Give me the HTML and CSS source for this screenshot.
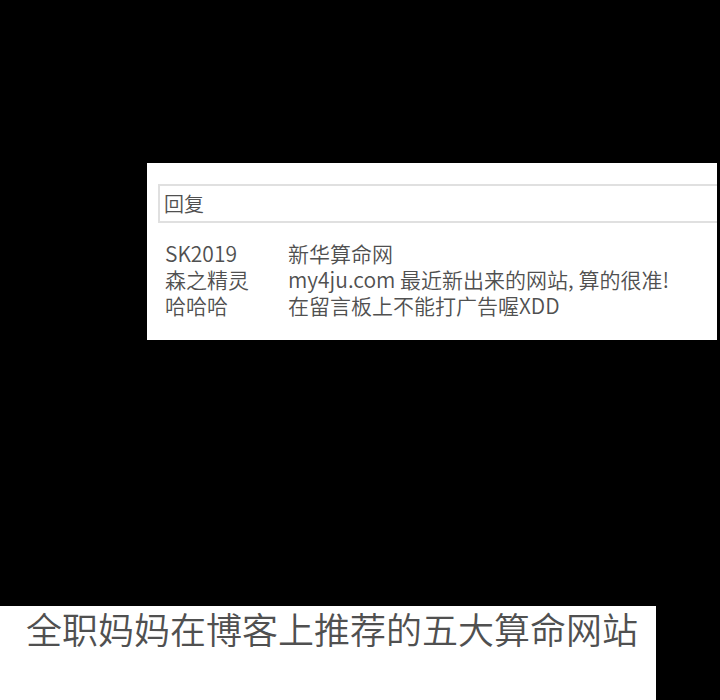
FILE: index.html
```html
<!DOCTYPE html>
<html lang="zh-CN">
<head>
<meta charset="utf-8">
<title>回复</title>
<link rel="stylesheet" href="styles.css">
</head>
<body>
<main class="page">
  <section class="replies">
    <input class="reply-box" type="text" value="回复" aria-label="回复">
    <table class="comments">
      <tr><td class="name">SK2019</td><td>新华算命网</td></tr>
      <tr><td class="name">森之精灵</td><td>my4ju.com 最近新出来的网站, 算的很准!</td></tr>
      <tr><td class="name">哈哈哈</td><td>在留言板上不能打广告喔XDD</td></tr>
    </table>
  </section>
  <header class="headline">
    <h1>全职妈妈在博客上推荐的五大算命网站</h1>
  </header>
</main>
</body>
</html>
```
FILE: styles.css
```css
* { box-sizing: border-box; }
body {
  margin: 0;
  background: #000;
  color: #505050;
  font-family: "Noto Sans CJK SC", sans-serif;
  font-weight: 350;
}
.page {
  min-height: 100vh;
  display: flex;
  flex-direction: column;
  justify-content: space-between;
  padding-top: 163px;
  overflow: hidden;
}
.replies {
  margin: 0 3px 0 147px;
  padding: 21px 0 22px 11px;
  background: #fff;
}
.reply-box {
  display: block;
  width: 100%;
  height: 39px;
  padding: 0 4px 1px;
  border: 2px solid #e0e0e0;
  border-right: 0;
  border-radius: 0;
  background: #fff;
  color: inherit;
  font: inherit;
  font-size: 20px;
}
.comments {
  margin: 17px 0 0 7px;
  border-collapse: collapse;
  font-size: 21px;
  line-height: 26px;
  white-space: nowrap;
}
.comments td { padding: 0; }
.comments .name { width: 123px; }
.headline {
  height: 94px;
  margin-right: 64px;
  padding-left: 26px;
  background: #fff;
}
.headline h1 {
  margin: 0;
  font-size: 36px;
  font-weight: inherit;
  line-height: 44px;
  white-space: nowrap;
}
```
